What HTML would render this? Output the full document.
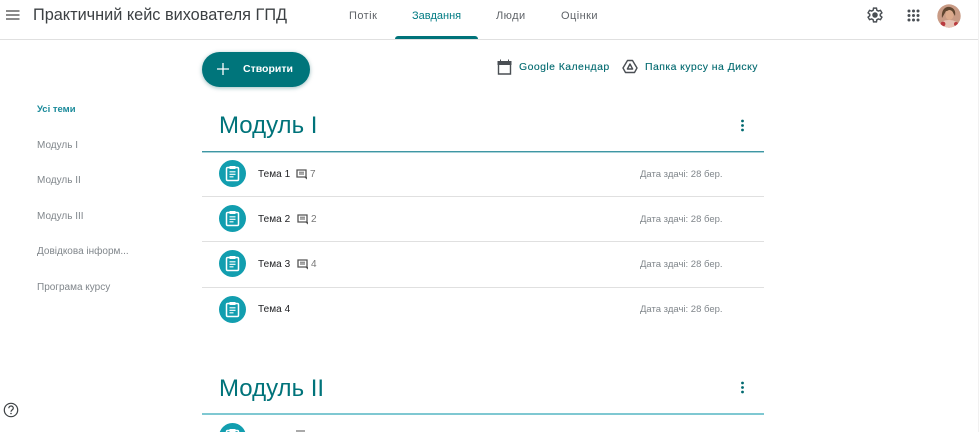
<!DOCTYPE html>
<html lang="uk"><head><meta charset="utf-8"><title>Завдання</title>
<style>
html,body{margin:0;padding:0;background:#fff;overflow:hidden;width:980px;height:432px}
#r{width:980px;height:432px;position:relative;overflow:hidden;font-family:"Liberation Sans",sans-serif}
.t{position:absolute;white-space:nowrap;line-height:16px}
.a{position:absolute}
.side{font-size:10px;color:#80868b;left:37px}
.tab{font-size:11px;color:#5f6368;top:8px;letter-spacing:.45px}
.item{font-size:10px;color:#202124;left:258px;letter-spacing:.05px}
.cnt{font-size:10px;color:#777}
.due{font-size:9.5px;color:#80868b;left:640px}
.h{font-size:24px;color:#00737a;left:219px;line-height:30px;position:absolute;white-space:nowrap}
.link{font-size:10.5px;color:#00696f;letter-spacing:.42px;-webkit-text-stroke:.1px #00696f}
.sep{position:absolute;left:202px;width:562px;height:1px;background:#e0e0e0}
</style></head><body><div id="r">
<!-- header -->
<svg class="a" style="left:6px;top:9px" width="14" height="12" viewBox="0 0 14 12"><path d="M0 2h13.500M0 6h13.500M0 10h13.500" stroke="#444" stroke-width="1.300"/></svg>
<div class="t" style="left:33px;top:7px;font-size:16.300px;color:#3c4043">Практичний кейс вихователя ГПД</div>
<div class="t tab" style="left:349px">Потік</div>
<div class="t tab" style="left:412px;color:#007b83;letter-spacing:0">Завдання</div>
<div class="t tab" style="left:496px">Люди</div>
<div class="t tab" style="left:561px">Оцінки</div>
<div class="a" style="left:395px;top:36px;width:83px;height:3px;background:#00737a;border-radius:3px 3px 0 0"></div>
<div class="a" style="left:0;top:39px;width:978px;height:1px;background:#e0e0e0"></div>
<div class="a" style="left:978px;top:0;width:1px;height:432px;background:#f1f1f1"></div>
<svg class="a" style="left:867px;top:7px" width="16" height="16" viewBox="1 1 22 22"><path fill="none" stroke="#4a4f54" stroke-width="2" d="M10 2.500h4l.6 3 2 1.100 2.900-1 2 3.400-2.300 2a6 6 0 0 1 0 2l2.300 2-2 3.400-2.900-1-2 1.100-.6 3h-4l-.6-3-2-1.100-2.900 1-2-3.400 2.300-2a6 6 0 0 1 0-2l-2.300-2 2-3.400 2.900 1 2-1.100z"/><circle cx="12" cy="12" r="3.800" fill="#4a4f54"/></svg>
<svg class="a" style="left:907px;top:9px" width="13" height="13" viewBox="0 0 13 13" fill="#4a4f54"><circle cx="2" cy="2" r="1.500"/><circle cx="6.500" cy="2" r="1.500"/><circle cx="11" cy="2" r="1.500"/><circle cx="2" cy="6.500" r="1.500"/><circle cx="6.500" cy="6.500" r="1.500"/><circle cx="11" cy="6.500" r="1.500"/><circle cx="2" cy="11" r="1.500"/><circle cx="6.500" cy="11" r="1.500"/><circle cx="11" cy="11" r="1.500"/></svg>
<svg class="a" style="left:937px;top:4px" width="24" height="24" viewBox="0 0 24 24"><defs><clipPath id="c"><circle cx="12" cy="12" r="11.700"/></clipPath></defs><g clip-path="url(#c)"><rect width="24" height="24" fill="#c99b85"/><path d="M5 14C4 5 9 2 13 3s6 4 5 9l-3-5-6 0z" fill="#5f452f"/><ellipse cx="12.500" cy="11" rx="4" ry="5" fill="#dcaa8c"/><path d="M2 24c0-6 5-8 10-8s10 2 10 8z" fill="#e6c3b5"/><circle cx="6" cy="20" r="2.400" fill="#b93a3f"/><circle cx="19" cy="20" r="2" fill="#b93a3f"/></g></svg>
<!-- create -->
<div class="a" style="left:202px;top:52px;width:108px;height:35px;border-radius:18px;background:#00757b;box-shadow:0 1px 4px rgba(0,90,95,.4)"></div>
<svg class="a" style="left:216px;top:62px" width="14" height="14" viewBox="0 0 14 14"><path d="M7 1v12M1 7h12" stroke="#fff" stroke-width="1.300"/></svg>
<div class="t" style="left:243px;top:61px;font-size:10.500px;font-weight:700;color:#fff">Створити</div>
<!-- links -->
<svg class="a" style="left:497px;top:59px" width="15" height="16" viewBox="0 0 15 16"><path d="M1.500 3h12v12h-12z" fill="none" stroke="#4a4f54" stroke-width="1.400"/><path d="M1 2.500h13v3H1zM3.500 .5v2M11.500 .5v2" fill="#4a4f54" stroke="#4a4f54"/></svg>
<div class="t link" style="left:519px;top:59px">Google Календар</div>
<svg class="a" style="left:622px;top:59px" width="16" height="15" viewBox="0 0 16 15"><path d="M5.500 1.500h5L15 9l-2.500 4.500h-9L1 9z M8 5l2.600 5H5.400z" fill="none" stroke="#4a4f54" stroke-width="1.400" stroke-linejoin="round"/></svg>
<div class="t link" style="left:645px;top:59px">Папка курсу на Диску</div>
<!-- sidebar -->
<div class="t side" style="top:102px;color:#1a8a9a;font-weight:700;font-size:9.500px">Усі теми</div>
<div class="t side" style="top:138px">Модуль I</div>
<div class="t side" style="top:173px">Модуль II</div>
<div class="t side" style="top:209px">Модуль III</div>
<div class="t side" style="top:244px">Довідкова інформ...</div>
<div class="t side" style="top:280px">Програма курсу</div>
<!-- module 1 -->
<div class="h" style="top:111px">Модуль I</div>
<svg class="a" style="left:740px;top:119px" width="5" height="13" viewBox="0 0 5 13" fill="#00696f"><circle cx="2.500" cy="2" r="1.400"/><circle cx="2.500" cy="6.500" r="1.400"/><circle cx="2.500" cy="11" r="1.400"/></svg>
<div class="a" style="left:202px;top:151px;width:562px;height:1px;background:#3f96a3;box-shadow:0 1px 0 #a9d3d9"></div>

<svg width="0" height="0" style="position:absolute"><defs><g id="ic"><circle cx="13.500" cy="13.500" r="13.500" fill="#129eaf"/><rect x="7.500" y="7.500" width="12" height="13" rx="1.200" fill="none" stroke="#fff" stroke-width="1.500"/><path d="M10.500 6h6v3h-6z" fill="#fff"/><path d="M10.500 11.800h6M10.500 14.300h6M10.500 16.800h4" stroke="#fff" stroke-width="1.200"/></g>
<g id="cm"><path d="M1 1h9v7H1z" fill="none" stroke="#555" stroke-width="1.300"/><path d="M3 3.200h5M3 5h5" stroke="#555" stroke-width=".9"/><path d="M8 8h3v2.500z" fill="#555"/></g></defs></svg>

<svg class="a" style="left:219px;top:160px" width="27" height="27"><use href="#ic"/></svg>
<div class="t item" style="top:167px">Тема 1</div>
<svg class="a" style="left:296px;top:169px" width="12" height="11"><use href="#cm"/></svg>
<div class="t cnt" style="left:310px;top:167px">7</div>
<div class="t due" style="top:167px">Дата здачі: 28 бер.</div>
<div class="sep" style="top:196px"></div>

<svg class="a" style="left:219px;top:205px" width="27" height="27"><use href="#ic"/></svg>
<div class="t item" style="top:212px">Тема 2</div>
<svg class="a" style="left:297px;top:214px" width="12" height="11"><use href="#cm"/></svg>
<div class="t cnt" style="left:311px;top:212px">2</div>
<div class="t due" style="top:212px">Дата здачі: 28 бер.</div>
<div class="sep" style="top:241px"></div>

<svg class="a" style="left:219px;top:250px" width="27" height="27"><use href="#ic"/></svg>
<div class="t item" style="top:257px">Тема 3</div>
<svg class="a" style="left:297px;top:259px" width="12" height="11"><use href="#cm"/></svg>
<div class="t cnt" style="left:311px;top:257px">4</div>
<div class="t due" style="top:257px">Дата здачі: 28 бер.</div>
<div class="sep" style="top:287px"></div>

<svg class="a" style="left:219px;top:296px" width="27" height="27"><use href="#ic"/></svg>
<div class="t item" style="top:302px">Тема 4</div>
<div class="t due" style="top:302px">Дата здачі: 28 бер.</div>
<!-- module 2 -->
<div class="h" style="top:374px">Модуль II</div>
<svg class="a" style="left:740px;top:381px" width="5" height="13" viewBox="0 0 5 13" fill="#00696f"><circle cx="2.500" cy="2" r="1.400"/><circle cx="2.500" cy="6.500" r="1.400"/><circle cx="2.500" cy="11" r="1.400"/></svg>
<div class="a" style="left:202px;top:413px;width:562px;height:2px;background:#7fc8d2"></div>
<svg class="a" style="left:219px;top:423px" width="27" height="27"><use href="#ic"/></svg>
<div class="a" style="left:296px;top:430px;width:9px;height:2px;background:#aaa"></div>
<!-- help -->
<svg class="a" style="left:3px;top:402px" width="16" height="16" viewBox="0 0 16 16"><circle cx="8" cy="8" r="6.700" fill="none" stroke="#3c4043" stroke-width="1.200"/><path d="M5.800 6.300c0-3 4.500-3 4.500-.2 0 1.800-2.300 1.800-2.300 3.700" fill="none" stroke="#3c4043" stroke-width="1.200"/><circle cx="8" cy="11.500" r=".8" fill="#3c4043"/></svg>
</div></body></html>
